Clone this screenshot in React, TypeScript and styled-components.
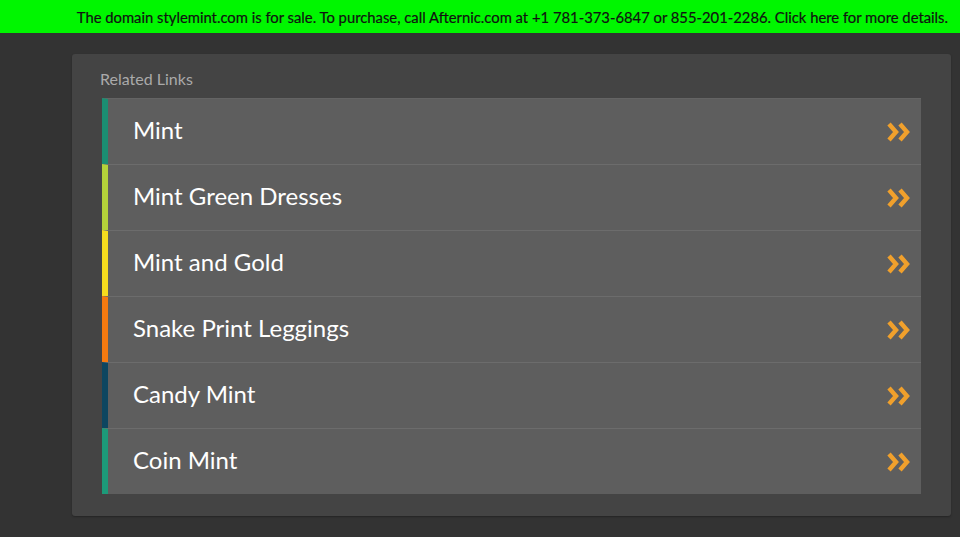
import styled, { createGlobalStyle } from 'styled-components'

const links = [
  { label: 'Mint', color: '#1b8e72' },
  { label: 'Mint Green Dresses', color: '#b3d23a' },
  { label: 'Mint and Gold', color: '#f6dc1e' },
  { label: 'Snake Print Leggings', color: '#f57a10' },
  { label: 'Candy Mint', color: '#0d4660' },
  { label: 'Coin Mint', color: '#1d9a79' },
]

const GlobalStyle = createGlobalStyle`
  html, body {
    margin: 0;
    padding: 0;
    background: #333333;
    font-family: Lato, "Open Sans", sans-serif;
  }
`

const Chevrons = () => (
  <Arrow width="24" height="22" viewBox="0 0 24 22">
    <path
      d="M2 3 L9 11 L2 19 M13 3 L20 11 L13 19"
      fill="none"
      stroke="#f0a02c"
      strokeWidth="4.4"
      strokeLinejoin="miter"
    />
  </Arrow>
)

export default function App() {
  return (
    <>
      <GlobalStyle />
      <SaleBar>
        The domain stylemint.com is for sale. To purchase, call Afternic.com at +1 781-373-6847 or
        855-201-2286. Click here for more details.
      </SaleBar>
      <Page>
        <Panel>
          <Heading>Related Links</Heading>
          <List>
            {links.map((l) => (
              <Row key={l.label} $accent={l.color}>
                <Label>{l.label}</Label>
                <Chevrons />
              </Row>
            ))}
          </List>
        </Panel>
      </Page>
    </>
  )
}

const SaleBar = styled.div`
  height: 33px;
  background: #00f600;
  color: #111;
  font-size: 14.8px;
  line-height: 35px;
  text-align: right;
  padding-right: 12px;
  white-space: nowrap;
  overflow: hidden;
  -webkit-text-stroke: 0.2px #111;
`

const Page = styled.main`
  padding: 21px 9px 22px 72px;
`

const Panel = styled.section`
  background: #444444;
  border-radius: 3px;
  padding: 16px 30px 22px 28px;
  box-shadow: 0 1px 2px rgba(0, 0, 0, 0.3);
`

const Heading = styled.div`
  color: #aaaaaa;
  font-size: 16px;
  line-height: 18px;
  margin-bottom: 10px;
`

const List = styled.div`
  display: flex;
  flex-direction: column;
  margin-left: 2px;
`

const Row = styled.a<{ $accent: string }>`
  display: flex;
  align-items: center;
  justify-content: space-between;
  height: 66px;
  background: #5e5e5e;
  border-left: 6px solid ${(p) => p.$accent};
  border-top: 1px solid #6c6c6c;
  padding: 0 10px 3px 25px;
  box-sizing: border-box;
  cursor: pointer;
  text-decoration: none;

  &:first-child {
    border-top-color: #646464;
  }

  &:hover {
    background: #666;
  }
`

const Label = styled.span`
  color: #ffffff;
  font-size: 24px;
  line-height: 30px;
`

const Arrow = styled.svg`
  margin-top: 3px;
  flex-shrink: 0;
`
